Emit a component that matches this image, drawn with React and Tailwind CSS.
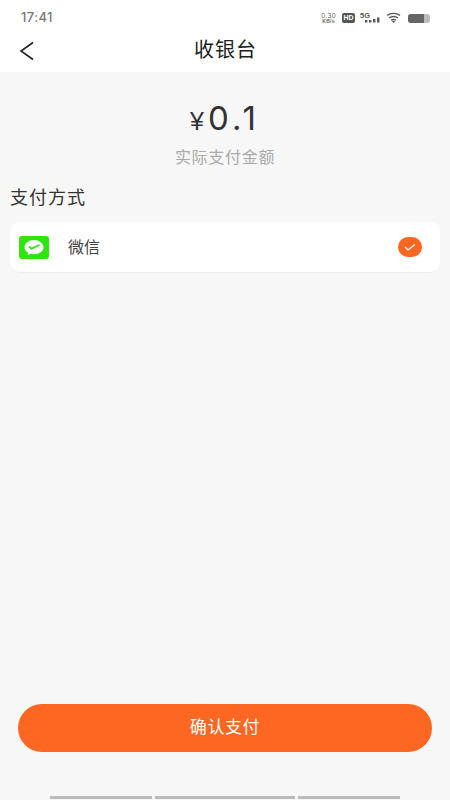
import React from 'react';

const CJK = 'font-["Noto_Sans_CJK_SC","Liberation_Sans",sans-serif]';

function StatusIcons() {
  return (
    <div className="flex items-center gap-[5px] text-[#555]">
      <div className="flex flex-col items-center font-['Liberation_Sans',sans-serif] text-[7px] leading-[6px] tracking-[0.3px] text-[#666]">
        <span>0.30</span>
        <span className="text-[5px] leading-[5px] font-bold">KB/s</span>
      </div>
      <div className="ml-[1px] flex h-[10px] w-[13px] items-center justify-center rounded-[2px] bg-[#555] font-['Liberation_Sans',sans-serif] text-[7px] font-bold text-white">
        HD
      </div>
      <svg width="21" height="12" viewBox="0 0 21 12">
        <text x="0" y="6" fontSize="7.5" fontWeight="700" fontFamily="Liberation Sans" fill="#555">5G</text>
        <rect x="5" y="8" width="2.4" height="2.5" fill="#555" />
        <rect x="9" y="8" width="2.4" height="2.5" fill="#555" />
        <rect x="13" y="7" width="2.4" height="3.5" fill="#555" />
        <rect x="17" y="5.5" width="2.4" height="5" fill="#555" />
      </svg>
      <svg width="16" height="12" viewBox="0 0 16 12" fill="none" stroke="#555" strokeWidth="1.3">
        <path d="M1 3.5C4.5 .6 10.5 .6 14 3.5" />
        <path d="M3 6C5.5 4 9.5 4 12 6" />
        <path d="M5 8.3C6.5 7.3 8.5 7.3 10 8.3" />
        <path d="M7.5 11L6 9.5C7 8.9 8 8.9 9 9.5Z" fill="#555" stroke="none" />
      </svg>
      <div className="ml-[1px] flex h-[9px] w-[22px] overflow-hidden rounded-[3px] bg-[#bbb]">
        <div className="h-full w-[16px] bg-[#666]" />
      </div>
    </div>
  );
}

function WechatLogo() {
  return (
    <div className="flex h-[23px] w-[30px] items-center justify-center rounded-[3px] bg-[#2ee60e]">
      <svg width="22" height="17" viewBox="0 0 22 17">
        <path d="M11 1C5.7 1 1.5 4.2 1.5 8.2c0 2.3 1.4 4.3 3.6 5.6l-.5 2.4 2.9-1.5c1.1.3 2.3.5 3.5.5 5.3 0 9.5-3.2 9.5-7S16.3 1 11 1Z" fill="#fff" />
        <path d="M6 7.4l2.3 2.2L16.5 6" fill="none" stroke="#2ee60e" strokeWidth="1.8" />
      </svg>
    </div>
  );
}

export default function App() {
  return (
    <div className={`flex h-[800px] w-[450px] flex-col overflow-hidden bg-[#f7f7f7] ${CJK}`}>
      <div className="bg-white">
        <div className="flex h-[36px] items-center justify-between pl-[21px] pr-[20px]">
          <span className="font-['Inter',sans-serif] text-[13px] font-medium tracking-[0.4px] text-[#777]">17:41</span>
          <StatusIcons />
        </div>
        <div className="relative flex h-[36px] items-center justify-center">
          <svg className="absolute left-[19px] top-[5px]" width="16" height="20" viewBox="0 0 16 20" fill="none" stroke="#222" strokeWidth="1.6">
            <path d="M14 1.5L2 10l12 8.5" />
          </svg>
          <span className="mb-[10px] pl-[1px] text-[20px] leading-[26px] tracking-[1px] text-[#222]">收银台</span>
        </div>
      </div>

      <div className="flex flex-col items-center pt-[24px]">
        <div className="flex items-baseline text-[#333]">
          <span className="mr-[4px] font-['Liberation_Sans',sans-serif] text-[25px] leading-none">¥</span>
          <span className="font-['Inter',sans-serif] text-[33px] leading-[44px] tracking-[4px]">0.1</span>
        </div>
        <p className="mt-[6px] text-[16px] leading-[20px] tracking-[0.7px] text-[#aaa]">实际支付金额</p>
      </div>

      <h2 className="mt-[19px] pl-[10px] text-[18px] leading-[22px] tracking-[1px] text-[#333]">支付方式</h2>

      <div className="mx-[10px] mt-[15px] flex h-[51px] items-center rounded-[10px] border-b border-[#eee] bg-white pl-[9px] pr-[18px]">
        <WechatLogo />
        <span className="mb-[2px] ml-[19px] text-[16px] text-[#444]">微信</span>
        <div className="ml-auto flex h-[20px] w-[24px] items-center justify-center rounded-full bg-[#fd6721]">
          <svg width="12" height="8" viewBox="0 0 12 8" fill="none" stroke="#fff" strokeWidth="1.2">
            <path d="M1 4l3 3 7-5.5" />
          </svg>
        </div>
      </div>

      <button className="mx-[18px] mt-[431px] h-[48px] rounded-full bg-[#fd6721] pb-[5px] text-[17px] tracking-[0.6px] text-white">
        确认支付
      </button>

      <div className="mt-[44px] flex justify-center gap-[3px]">
        <div className="h-[3px] w-[102px] bg-[#bbb]" />
        <div className="h-[3px] w-[140px] bg-[#bbb]" />
        <div className="h-[3px] w-[102px] bg-[#bbb]" />
      </div>
    </div>
  );
}
